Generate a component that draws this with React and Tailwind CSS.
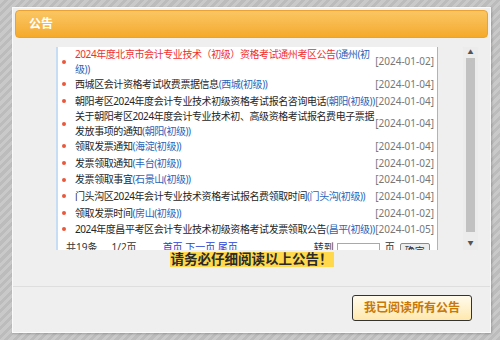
const ROWS = [
  { title: "2024年度北京市会计专业技术（初级）资格考试通州考区公告", area: "(通州(初级))", date: "2024-01-02", hot: true },
  { title: "西城区会计资格考试收费票据信息", area: "(西城(初级))", date: "2024-01-04" },
  { title: "朝阳考区2024年度会计专业技术初级资格考试报名咨询电话", area: "(朝阳(初级))", date: "2024-01-04" },
  { title: "关于朝阳考区2024年度会计专业技术初、高级资格考试报名费电子票据发放事项的通知", area: "(朝阳(初级))", date: "2024-01-04" },
  { title: "领取发票通知", area: "(海淀(初级))", date: "2024-01-04" },
  { title: "发票领取通知", area: "(丰台(初级))", date: "2024-01-02" },
  { title: "发票领取事宜", area: "(石景山(初级))", date: "2024-01-04" },
  { title: "门头沟区2024年会计专业技术资格考试报名费领取时间", area: "(门头沟(初级))", date: "2024-01-04" },
  { title: "领取发票时间", area: "(房山(初级))", date: "2024-01-02" },
  { title: "2024年度昌平考区会计专业技术初级资格考试发票领取公告", area: "(昌平(初级))", date: "2024-01-05" },
];

function NoticeRow({ row }) {
  return (
    <li className="flex items-center min-h-[16.6px] leading-[14.5px]">
      <span className="w-[4px] h-[4px] rounded-full bg-[#e9583a] ml-[4px] mr-[9px] shrink-0" />
      <span className={`w-[302px] tracking-[-0.42px] ${row.hot ? "text-[#f02f2f]" : "text-[#262626]"}`}>
        {row.title}
        <span className="text-[#2a64b8]">{row.area}</span>
      </span>
      <span className="ml-auto text-[#777] whitespace-nowrap">[{row.date}]</span>
    </li>
  );
}

function Pager() {
  return (
    <div className="flex items-center h-[17px] mt-[1px] text-[#333] whitespace-nowrap">
      <span className="ml-[8px]">共19条</span>
      <span className="ml-[14px]">1/2页</span>
      <span className="ml-[26px] text-[#1f3fd4]">首页 下一页 尾页</span>
      <span className="ml-[76px]">转到</span>
      <span className="ml-[3px] w-[43px] h-[16px] bg-white border border-[#a9a9a9] mt-[8px]" />
      <span className="ml-[5px]">页</span>
      <span className="ml-[5px] mt-[8px] h-[16px] px-[4px] border border-[#8a8a8a] rounded-[2px] bg-[#ececec] leading-[14px]">确定</span>
    </div>
  );
}

function ScrollBar() {
  return (
    <div className="w-[15px] h-full bg-[#ececec] flex flex-col items-center">
      <span className="h-[11px] text-[6px] leading-[11px] text-[#555]">▲</span>
      <span className="w-[9px] h-[174px] bg-[#c1c1c1]" />
      <span className="mt-auto h-[14px] text-[6px] leading-[14px] text-[#555]">▼</span>
    </div>
  );
}

export default function App() {
  return (
    <div className="w-[500px] h-[340px] overflow-hidden bg-[repeating-linear-gradient(135deg,#c9c9c9_0,#c9c9c9_3px,#bcbcbc_3px,#bcbcbc_6px)] pt-[7px] pl-[12px] font-['Noto_Sans','Noto_Sans_CJK_SC',sans-serif]">
      <div className="w-[479px] h-[326px] bg-[#efefef] border border-[#fafafa] shadow-[1px_1px_2px_rgba(0,0,0,0.2)] flex flex-col">
        <div className="mx-[2px] mt-[2px] h-[28px] rounded-[4px] border border-[#eba232] bg-gradient-to-b from-[#fac662] to-[#f5aa28] flex items-center pl-[13px]">
          <span className="text-white font-bold text-[12px]">公告</span>
        </div>

        <div className="mt-[9px] h-[203px] overflow-hidden flex">
          <div className="ml-[43px] w-[382px] h-full bg-white border-l-2 border-l-[#c5def5] border-r border-r-[#8ebbe9] pr-[3px] text-[10px] overflow-hidden">
            <ul>
              {ROWS.map((row, i) => (
                <NoticeRow key={i} row={row} />
              ))}
            </ul>
            <Pager />
          </div>
          <div className="ml-[25px]">
            <ScrollBar />
          </div>
        </div>

        <div className="flex justify-center mt-[2px]">
          <span className="bg-[#ffd84c] text-[#2a2a2a] font-bold text-[13.5px] leading-[15px] px-[1px]">
            请务必仔细阅读以上公告！
          </span>
        </div>

        <div className="mt-[19px] border-t border-[#dedede]" />

        <div className="flex justify-end pr-[18px] pt-[8px]">
          <button className="w-[120px] h-[26px] rounded-[3px] border border-[#333] bg-gradient-to-b from-[#fffbec] to-[#ffe8ad] text-[#c97808] font-bold text-[12px]">
            我已阅读所有公告
          </button>
        </div>
      </div>
    </div>
  );
}
